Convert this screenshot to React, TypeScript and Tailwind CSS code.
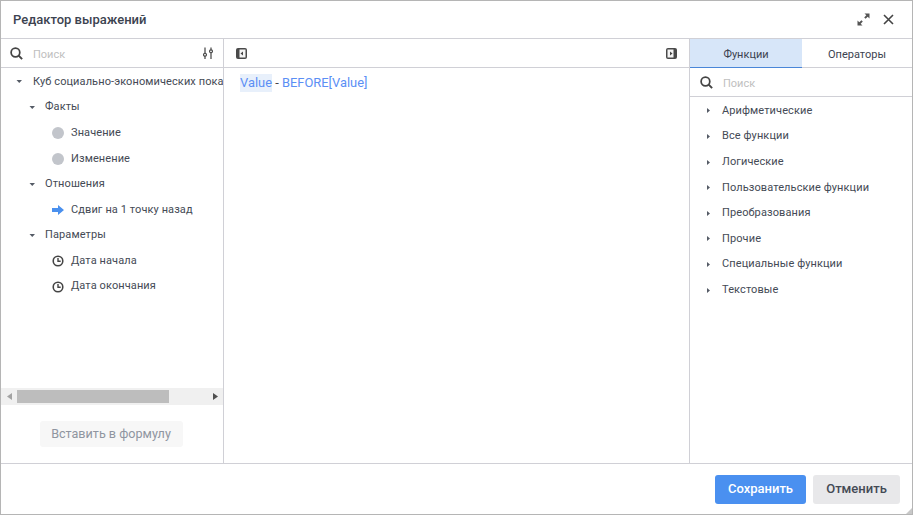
import React from "react";

const Caret = ({ right = false }: { right?: boolean }) => (
  <svg width="7" height="7" viewBox="0 0 7 7" className="shrink-0">
    {right ? <path d="M2 1 L5 3.5 L2 6 Z" fill="#555b66" /> : <path d="M0.5 2 L6 2 L3.25 5 Z" fill="#555b66" />}
  </svg>
);

const SearchIcon = () => (
  <svg width="13" height="13" viewBox="0 0 15 15" fill="none" stroke="#444" strokeWidth="2" className="shrink-0">
    <circle cx="6.3" cy="6.3" r="5" />
    <path d="M10 10 L14 14" strokeWidth="2.3" />
  </svg>
);

const Clock = () => (
  <svg width="12" height="12" viewBox="0 0 13 13" fill="none" stroke="#444" className="shrink-0">
    <circle cx="6.5" cy="6.5" r="5.2" strokeWidth="1.7" />
    <path d="M6.5 3.2 V6.8 H9.4" strokeWidth="1.5" />
  </svg>
);

const Dot = () => <span className="w-[12px] h-[12px] rounded-full bg-[#c2c5cb] shrink-0" />;

const ArrowIcon = () => (
  <svg width="12" height="10" viewBox="0 0 12 10" className="shrink-0">
    <path d="M0 3 H6 V0 L12 5 L6 10 V7 H0 Z" fill="#4a90ee" />
  </svg>
);

const PanelIcon = ({ right = false }: { right?: boolean }) => (
  <svg width="11" height="11" viewBox="0 0 11 11">
    <rect x="0" y="0" width="11" height="11" rx="2" fill="#4a4a4a" />
    <rect x={right ? 1.5 : 3.5} y="1.5" width="6" height="8" fill="#f4f4f4" />
    {right ? <path d="M4 3.5 L6.5 5.5 L4 7.5 Z" fill="#444" /> : <path d="M7 3.5 L4.5 5.5 L7 7.5 Z" fill="#444" />}
  </svg>
);

const Row = ({ pad, icon, label }: { pad: string; icon: React.ReactNode; label: string }) => (
  <div className={`flex items-center ${pad} h-[25.6px] whitespace-nowrap`}>
    {icon}
    <span className="text-[11px] text-[#444a55] tracking-[0.1px]">{label}</span>
  </div>
);

const functions = [
  "Арифметические",
  "Все функции",
  "Логические",
  "Пользовательские функции",
  "Преобразования",
  "Прочие",
  "Специальные функции",
  "Текстовые",
];

export default function App() {
  return (
    <div className="w-[913px] h-[515px] bg-white flex flex-col border border-[#b5b5b5] font-['Roboto',sans-serif] relative overflow-hidden">
      <div className="h-[38px] shrink-0 flex items-center justify-between pl-[12px] pr-[17px] border-b border-[#d0d0d6]">
        <span className="text-[13px] font-medium text-[#3c4350]">Редактор выражений</span>
        <div className="flex items-center gap-[12px]">
          <svg width="13" height="13" viewBox="0 0 13 13" fill="#555">
            <path d="M7.5 0.5 H12.5 V5.5 L10.7 3.7 L8.6 5.8 L7.2 4.4 L9.3 2.3 Z" />
            <path d="M5.5 12.5 H0.5 V7.5 L2.3 9.3 L4.4 7.2 L5.8 8.6 L3.7 10.7 Z" />
          </svg>
          <svg width="13" height="13" viewBox="0 0 13 13" stroke="#444" strokeWidth="1.6" fill="none">
            <path d="M2 2 L11 11 M11 2 L2 11" />
          </svg>
        </div>
      </div>

      <div className="flex-1 flex min-h-0">
        <div className="w-[223px] shrink-0 flex flex-col border-r border-[#d0d0d6]">
          <div className="h-[29px] shrink-0 flex items-center pl-[9px] pr-[9px] border-b border-[#d0d0d6]">
            <SearchIcon />
            <span className="ml-[10px] pt-[5px] text-[11px] text-[#c0c0c0] flex-1">Поиск</span>
            <svg width="12" height="12" viewBox="0 0 13 14" fill="none" stroke="#444" strokeWidth="1.4">
              <path d="M3 0.5 V14 M10 0.5 V14" />
              <circle cx="3" cy="9" r="1.7" fill="#fff" />
              <circle cx="10" cy="5" r="1.7" fill="#fff" />
            </svg>
          </div>
          <div className="flex-1 overflow-hidden min-h-0 pt-[1.2px]">
            <Row pad="pl-[15px]" icon={<span className="mr-[10px] flex"><Caret /></span>} label="Куб социально-экономических показателей" />
            <Row pad="pl-[28px]" icon={<span className="mr-[9px] flex"><Caret /></span>} label="Факты" />
            <Row pad="pl-[51px]" icon={<span className="mr-[7px] flex"><Dot /></span>} label="Значение" />
            <Row pad="pl-[51px]" icon={<span className="mr-[7px] flex"><Dot /></span>} label="Изменение" />
            <Row pad="pl-[28px]" icon={<span className="mr-[9px] flex"><Caret /></span>} label="Отношения" />
            <Row pad="pl-[51px]" icon={<span className="mr-[7px] flex"><ArrowIcon /></span>} label="Сдвиг на 1 точку назад" />
            <Row pad="pl-[28px]" icon={<span className="mr-[9px] flex"><Caret /></span>} label="Параметры" />
            <Row pad="pl-[51px]" icon={<span className="mr-[7px] flex"><Clock /></span>} label="Дата начала" />
            <Row pad="pl-[51px]" icon={<span className="mr-[7px] flex"><Clock /></span>} label="Дата окончания" />
          </div>
          <div className="h-[17px] shrink-0 bg-[#f0f0f0] flex items-center">
            <span className="w-[16px] flex justify-center">
              <svg width="5" height="7" viewBox="0 0 5 7"><path d="M5 0 V7 L0 3.5 Z" fill="#a3a3a3" /></svg>
            </span>
            <div className="w-[152px] h-[13px] bg-[#bdbdbd]" />
            <span className="flex-1 flex justify-end pr-[5px]">
              <svg width="5" height="7" viewBox="0 0 5 7"><path d="M0 0 V7 L5 3.5 Z" fill="#505050" /></svg>
            </span>
          </div>
          <div className="h-[58px] shrink-0 flex items-start justify-center pt-[16px]">
            <button className="w-[143px] h-[26px] rounded-[3px] bg-[#f7f7f7] text-[12.6px] text-[#8f95a0] ml-[-2px]">Вставить в формулу</button>
          </div>
        </div>

        <div className="flex-1 min-w-0 flex flex-col border-r border-[#d0d0d6]">
          <div className="h-[29px] shrink-0 flex items-center justify-between pl-[12px] pr-[12px] border-b border-[#d0d0d6]">
            <PanelIcon />
            <PanelIcon right />
          </div>
          <div className="pl-[16px] pt-[6px] text-[12.9px] leading-[18px] text-[#5b8ff5]">
            <span className="bg-[#e8f0fb] inline-block">Value</span>
            <span className="text-[#444]"> - </span>
            <span>BEFORE[Value]</span>
          </div>
        </div>

        <div className="w-[222px] shrink-0 flex flex-col">
          <div className="h-[29px] shrink-0 flex">
            <div className="w-[112px] pt-[4px] bg-[#d7e6f9] border-b border-[#4a86d8] flex items-center justify-center text-[11px] text-[#3c4350]">Функции</div>
            <div className="flex-1 pt-[4px] border-b border-[#d0d0d6] flex items-center justify-center text-[11px] text-[#3c4350]">Операторы</div>
          </div>
          <div className="h-[29px] shrink-0 flex items-center pl-[10px] border-b border-[#d0d0d6]">
            <SearchIcon />
            <span className="ml-[10px] pt-[5px] text-[11px] text-[#c0c0c0]">Поиск</span>
          </div>
          <div className="pt-[1.2px]">
            {functions.map((f) => (
              <div key={f} className="h-[25.6px] flex items-center pl-[15px] whitespace-nowrap">
                <span className="mr-[10px] flex"><Caret right /></span>
                <span className="text-[11px] text-[#444a55] tracking-[0.1px]">{f}</span>
              </div>
            ))}
          </div>
        </div>
      </div>

      <div className="h-[51px] shrink-0 border-t border-[#d0d0d6] flex items-center justify-end gap-[7px] pr-[12px]">
        <button className="w-[91px] h-[29px] rounded-[3px] bg-[#4a90f0] text-white text-[13px] font-medium">Сохранить</button>
        <button className="w-[87px] h-[29px] rounded-[3px] bg-[#e8e8ea] text-[#444a55] text-[13px] font-medium">Отменить</button>
      </div>

      <svg width="6" height="6" viewBox="0 0 6 6" className="absolute right-[0px] bottom-[0px]">
        <path d="M6 0 V6 H0 Z" fill="#c8c8c8" />
      </svg>
    </div>
  );
}
